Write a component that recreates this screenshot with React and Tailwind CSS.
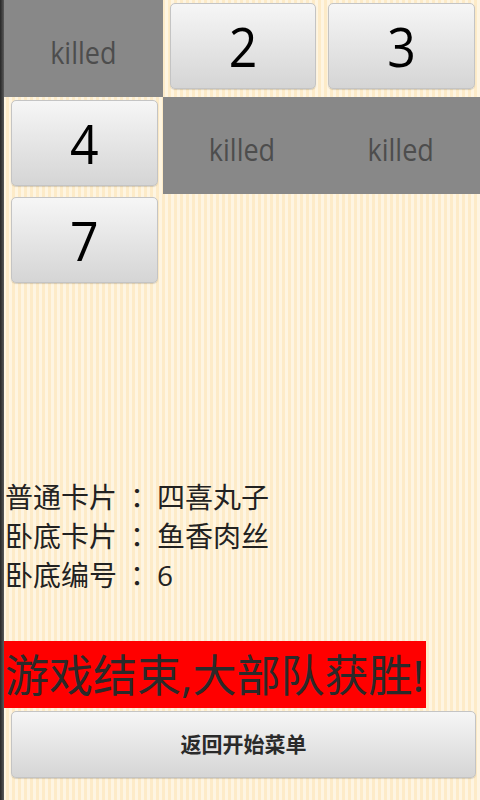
const cells = [
  { killed: true },
  { label: '2' },
  { label: '3' },
  { label: '4' },
  { killed: true },
  { killed: true },
  { label: '7' },
];

const info = [
  ['普通卡片', '四喜丸子'],
  ['卧底卡片', '鱼香肉丝'],
  ['卧底编号', '6'],
];

function Cell({ cell }) {
  if (cell.killed) {
    return (
      <div className="h-[97px] pt-[10px] bg-[#888888] flex items-center justify-center">
        <span className="text-[27px] text-[#4d4d4d] scale-y-[1.15] inline-block">killed</span>
      </div>
    );
  }
  return (
    <div className="h-[97px] pt-[3px] pl-[7px] pr-[5px] pb-[8px]">
      <button className="w-full h-full rounded-[5px] border border-[#c4c4c4] bg-gradient-to-b from-[#f6f6f6] to-[#d5d5d5] shadow-[0_1px_1px_rgba(0,0,0,0.15)] flex items-center justify-center">
        <span className="text-[50px] leading-none text-black scale-y-[1.1] inline-block">{cell.label}</span>
      </button>
    </div>
  );
}

export default function App() {
  return (
    <div
      className="w-[480px] min-h-[800px] flex bg-[repeating-linear-gradient(90deg,#fdebc8_0px,#fdebc8_3px,#fef5e2_3px,#fef5e2_6px)]"
      style={{ fontFamily: '"Open Sans", "Noto Sans CJK SC", sans-serif' }}
    >
      <div className="w-[4px] bg-gradient-to-r from-[#262626] to-[#5a5a5a]" />
      <div className="flex-1 flex flex-col">
        <div className="grid grid-cols-3">
          {cells.map((c, i) => (
            <Cell key={i} cell={c} />
          ))}
        </div>

        <div className="mt-[187px] pl-[1px] text-[28px] leading-[39px] text-[#222]">
          {info.map(([k, v]) => (
            <div key={k} className="h-[39px] flex items-center">
              <span>{k}</span>
              <span
                className="w-[40px] text-center"
                style={{ fontFamily: '"Noto Sans CJK TC", sans-serif' }}
              >
                ：
              </span>
              <span>{v}</span>
            </div>
          ))}
        </div>

        <div className="mt-[46px] self-start bg-[#ff0000] h-[67px] pl-[1px] pr-[2px] flex items-center">
          <span className="text-[44px] leading-none text-[#2a2a2a]">游戏结束,大部队获胜!</span>
        </div>

        <button className="mt-[3px] ml-[7px] mr-[4px] h-[67px] rounded-[5px] border border-[#c4c4c4] bg-gradient-to-b from-[#f6f6f6] to-[#d5d5d5] shadow-[0_1px_1px_rgba(0,0,0,0.15)] flex items-center justify-center">
          <span className="text-[21px] font-bold text-[#2a2a2a]">返回开始菜单</span>
        </button>
      </div>
    </div>
  );
}
